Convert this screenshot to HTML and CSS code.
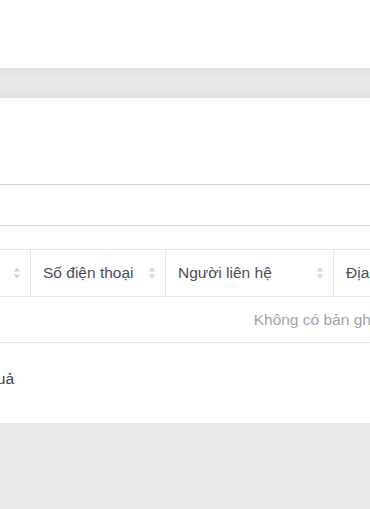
FILE: index.html
```html
<!DOCTYPE html>
<html lang="vi">
<head>
    <meta charset="UTF-8">
    <meta name="viewport" content="width=device-width, initial-scale=1.0">
    <title>Khách hàng</title>
    <link rel="stylesheet" href="styles.css">
</head>
<body>
    <div class="page">
        <div class="topbar"></div>

        <div class="content">
            <div class="card">
                <div class="filter"></div>

                <table class="data-table">
                    <colgroup>
                        <col class="col-name">
                        <col class="col-phone">
                        <col class="col-contact">
                        <col>
                    </colgroup>
                    <thead>
                        <tr>
                            <th><span class="th-inner"><span>Tên khách hàng</span><svg class="sort" viewBox="0 0 8 12"><path d="M4 0.5L7.5 4.5H0.5Z"/><path d="M0.5 7.5H7.5L4 11.5Z"/></svg></span></th>
                            <th><span class="th-inner"><span>Số điện thoại</span><svg class="sort" viewBox="0 0 8 12"><path d="M4 0.5L7.5 4.5H0.5Z"/><path d="M0.5 7.5H7.5L4 11.5Z"/></svg></span></th>
                            <th><span class="th-inner"><span>Người liên hệ</span><svg class="sort" viewBox="0 0 8 12"><path d="M4 0.5L7.5 4.5H0.5Z"/><path d="M0.5 7.5H7.5L4 11.5Z"/></svg></span></th>
                            <th><span class="th-inner"><span>Địa chỉ</span></span></th>
                        </tr>
                    </thead>
                    <tbody>
                        <tr>
                            <td class="empty" colspan="4">Không có bản ghi</td>
                        </tr>
                    </tbody>
                </table>

                <div class="footer">Tổng số 0 kết quả</div>
            </div>
        </div>
    </div>
</body>
</html>
```

FILE: styles.css
```css
body {
    margin: 0;
    background-color: #e9e9e9;
    overflow: hidden;
    font-family: Arial, "Liberation Sans", Helvetica, sans-serif;
    font-size: 15.5px;
    color: #4d4d5a;
}
.page {
    width: 1228px;
    margin-left: -300px;
}
.topbar {
    height: 68px;
    background-color: #fff;
    box-shadow: 0 2px 10px rgba(0, 0, 0, 0.06);
    position: relative;
    z-index: 1;
}
.content { padding-top: 30px; }
.card {
    background-color: #fff;
    height: 325px;
    box-shadow: 0 8px 26px rgba(0, 0, 0, 0.09);
    overflow: hidden;
}
.filter {
    margin-top: 86px;
    height: 40px;
    border-top: 1px solid #d6d6db;
    border-bottom: 1px solid #d6d6db;
}
.data-table {
    width: 100%;
    margin-top: 23px;
    table-layout: fixed;
    border-collapse: separate;
    border-spacing: 0;
    border-top: 1px solid #e6e6ec;
}
.col-name { width: 331px; }
.col-phone { width: 135px; }
.col-contact { width: 168px; }
.data-table th {
    height: 46px;
    padding: 0 9px 0 12px;
    font-weight: normal;
    text-align: left;
    white-space: nowrap;
    border-right: 1px solid #e6e6ec;
    border-bottom: 1px solid #e6e6ec;
}
.data-table th:last-child { border-right: none; }
.th-inner {
    display: flex;
    align-items: center;
    justify-content: space-between;
}
.sort {
    width: 8px;
    height: 12px;
    fill: #d3d4da;
    flex-shrink: 0;
}
.data-table td {
    height: 45px;
    padding: 0;
    border-bottom: 1px solid #e6e6ec;
}
.empty {
    text-align: center;
    color: #a3a3ab;
}
.footer {
    padding: 26px 0 0 190px;
    line-height: 20px;
    color: #3f3f4a;
}
```
